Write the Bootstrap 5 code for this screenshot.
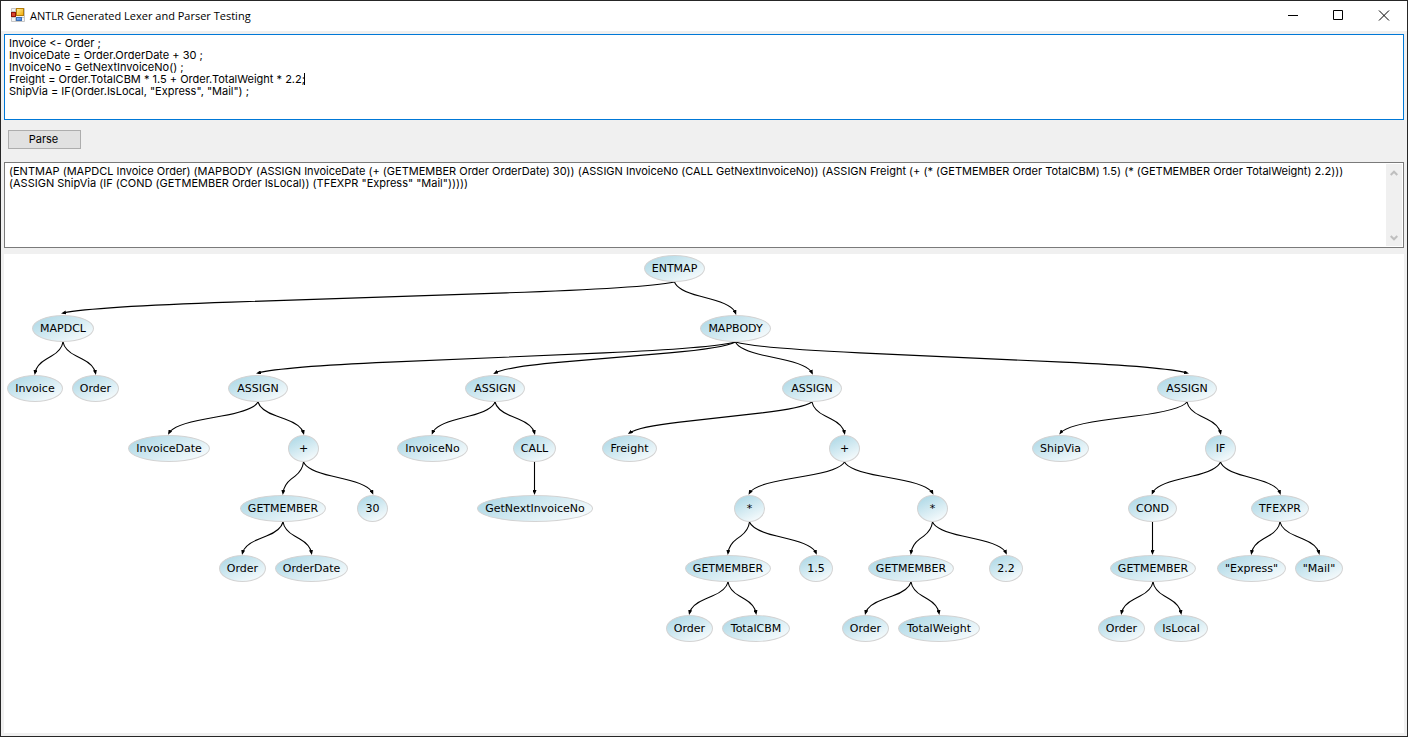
<!DOCTYPE html>
<html lang="en">
<head>
<meta charset="utf-8">
<meta name="viewport" content="width=device-width, initial-scale=1">
<title>ANTLR Generated Lexer and Parser Testing</title>
<link href="https://cdn.jsdelivr.net/npm/bootstrap@5.3.0/dist/css/bootstrap.min.css" rel="stylesheet">
<style>
  body { background: #f0f0f0; color: #000; font: 11px/12px Inter, "Liberation Sans", sans-serif; }
  .app-window { border: 1px solid #262626; }
  .title-bar { height: 30px; background: #fff; }
  .app-icon { margin: 0 4px 0 9px; }
  .title-text { font: 11px/16px "Open Sans", "Noto Sans", sans-serif; }
  .win-btn { width: 46px; height: 30px; padding: 0; border: 0; background: none; color: #000; }
  .client { padding: 3px; }
  .edit-box { height: 86px; background: #fff; border: 1px solid #7a7a7a; }
  .edit-box.active { border-color: #0078d7; }
  .edit-box textarea { padding: 2px 4px; border: 0; outline: 0; resize: none; overflow: hidden; background: none; color: #000; font: inherit; font-feature-settings: "calt" 0; }
  .caret { position: absolute; left: 299px; top: 38px; width: 1px; height: 12px; background: #000; }
  .scroll-strip { width: 16px; margin: 1px; background: #f0f0f0; color: #bfbfbf; }
  .scroll-strip button { height: 17px; padding: 0; border: 0; background: none; color: inherit; }
  .btn-parse { width: 73px; height: 19px; padding: 0 2px 1px 0; border: 1px solid #adadad; border-radius: 0; background: #e1e1e1; color: #000; font: inherit; }
  .tool-row { padding: 10px 4px 13px; }
  .tree-canvas { min-height: 479px; margin-top: 6px; background: #fff; }
  .tree-canvas svg { display: block; overflow: visible; }
  .tree-node { position: absolute; height: 27px; border: 1px solid #d3d3d3; border-radius: 50%; background: linear-gradient(155deg, #add8e6 5%, #fff 100%); font: 11px/26px "DejaVu Sans", Verdana, sans-serif; text-align: center; white-space: nowrap; display: flex; justify-content: center; }
</style>
</head>
<body>
<div class="app-window d-flex flex-column min-vh-100">
  <header class="title-bar d-flex align-items-center">
    <svg class="app-icon" width="16" height="16" viewBox="0 0 16 16" aria-hidden="true">
      <defs>
        <linearGradient id="gy" x1="0" y1="0" x2="1" y2="1"><stop offset="0" stop-color="#fff0a0"/><stop offset="1" stop-color="#f0a800"/></linearGradient>
        <linearGradient id="gb" x1="0" y1="0" x2="1" y2="1"><stop offset="0" stop-color="#9cc4ff"/><stop offset="1" stop-color="#2f74e0"/></linearGradient>
      </defs>
      <path d="M1.500 .5h13v13h-13z" fill="#f4f4f4" stroke="#c6c6c6"/>
      <path d="M1.500 3.500h5M5.500 1v12M1 9.500h14" stroke="#c6c6c6"/>
      <rect x="6.500" y=".5" width="7" height="7" fill="url(#gy)" stroke="#b67d08"/>
      <rect x="1.500" y="4.500" width="4" height="4" fill="#d8432f" stroke="#8e1509"/>
      <rect x="6.500" y="9.500" width="5" height="3" fill="url(#gb)" stroke="#3c6fb4"/>
    </svg>
    <span class="title-text flex-grow-1">ANTLR Generated Lexer and Parser Testing</span>
    <button type="button" class="win-btn" aria-label="Minimize"><svg width="11" height="11" viewBox="0 0 11 11"><path d="M1 4.500h10" stroke="currentColor"/></svg></button>
    <button type="button" class="win-btn" aria-label="Maximize"><svg width="11" height="11" viewBox="0 0 11 11" overflow="visible"><path d="M.5 -.5h9v9h-9z" fill="none" stroke="currentColor"/></svg></button>
    <button type="button" class="win-btn" aria-label="Close"><svg width="11" height="11" viewBox="0 0 11 11" overflow="visible"><path d="M0 -.5l10 10M10 -.5l-10 10" stroke="currentColor"/></svg></button>
  </header>

  <main class="client d-flex flex-column flex-grow-1">
    <div class="edit-box active d-flex position-relative">
      <textarea class="flex-grow-1" aria-label="Source" spellcheck="false">Invoice &lt;- Order ;
InvoiceDate = Order.OrderDate + 30 ;
InvoiceNo = GetNextInvoiceNo() ;
Freight = Order.TotalCBM * 1.5 + Order.TotalWeight * 2.2;
ShipVia = IF(Order.IsLocal, "Express", "Mail") ;</textarea>
      <span class="caret"></span>
    </div>
    <div class="tool-row d-flex">
      <button type="button" class="btn btn-parse">Parse</button>
    </div>
    <div class="edit-box d-flex">
      <textarea class="flex-grow-1" aria-label="Parse result" spellcheck="false" readonly>(ENTMAP (MAPDCL Invoice Order) (MAPBODY (ASSIGN InvoiceDate (+ (GETMEMBER Order OrderDate) 30)) (ASSIGN InvoiceNo (CALL GetNextInvoiceNo)) (ASSIGN Freight (+ (* (GETMEMBER Order TotalCBM) 1.5) (* (GETMEMBER Order TotalWeight) 2.2))) (ASSIGN ShipVia (IF (COND (GETMEMBER Order IsLocal)) (TFEXPR "Express" "Mail")))))</textarea>
      <div class="scroll-strip d-flex flex-column justify-content-between">
        <button type="button" class="d-flex align-items-center justify-content-center" aria-label="Scroll up" disabled><svg width="8" height="6" viewBox="0 0 8 6"><path d="M.7 5L4 1.700 7.300 5" fill="none" stroke="currentColor" stroke-width="2"/></svg></button>
        <button type="button" class="d-flex align-items-center justify-content-center" aria-label="Scroll down" disabled><svg width="8" height="6" viewBox="0 0 8 6"><path d="M.7 1L4 4.300 7.300 1" fill="none" stroke="currentColor" stroke-width="2"/></svg></button>
      </div>
    </div>
    <div class="tree-canvas position-relative flex-grow-1" id="tree">
      <svg width="100%" height="400" aria-hidden="true">
        <defs>
          <marker id="tip" viewBox="0 0 5 4" refX="3" refY="2" markerWidth="5" markerHeight="4" markerUnits="userSpaceOnUse" orient="auto"><path d="M0 0L5 2 0 4z"/></marker>
        </defs>
        <g id="edges" fill="none" stroke="#000" stroke-width="1.100"></g>
      </svg>
    </div>
  </main>
</div>
<script src="https://cdn.jsdelivr.net/npm/bootstrap@5.3.0/dist/js/bootstrap.bundle.min.js"></script>
<script>
  // Each node: label, left edge, width, children.
  const root = ['ENTMAP', 640, 61, [
    ['MAPDCL', 28, 62, [['Invoice', 3, 56], ['Order', 68, 47]]],
    ['MAPBODY', 696, 71, [
      ['ASSIGN', 224, 60, [
        ['InvoiceDate', 124, 82],
        ['+', 284, 31, [
          ['GETMEMBER', 236, 86, [['Order', 215, 47], ['OrderDate', 271, 73]]],
          ['30', 353, 31]]]]],
      ['ASSIGN', 461, 60, [
        ['InvoiceNo', 393, 71],
        ['CALL', 509, 43, [['GetNextInvoiceNo', 473, 116]]]]],
      ['ASSIGN', 778, 60, [
        ['Freight', 598, 55],
        ['+', 825, 31, [
          ['*', 730, 31, [
            ['GETMEMBER', 681, 86, [['Order', 662, 47], ['TotalCBM', 718, 68]]],
            ['1.5', 795, 34]]],
          ['*', 913, 31, [
            ['GETMEMBER', 864, 86, [['Order', 838, 47], ['TotalWeight', 894, 82]]],
            ['2.2', 985, 34]]]]]]],
      ['ASSIGN', 1153, 60, [
        ['ShipVia', 1028, 57],
        ['IF', 1201, 31, [
          ['COND', 1124, 49, [
            ['GETMEMBER', 1106, 86, [['Order', 1094, 47], ['IsLocal', 1150, 54]]]]],
          ['TFEXPR', 1247, 58, [['"Express"', 1213, 69], ['"Mail"', 1291, 48]]]]]]]]]]];
  const ROW = 60, TOP = 1, HEIGHT = 27;
  const tree = document.getElementById('tree'), edges = document.getElementById('edges');

  // An S-curve that leaves the parent's foot, runs straight, and bends into the child's head.
  function edge(x1, y1, x2, y2) {
    if (Math.abs(x2 - x1) < 1) x2 = x1;
    const dx = x2 - x1, dy = y2 - y1;
    const near = Math.abs(dx) < 150, bend = near ? .4 : .25, drop = near ? .27 : .2;
    const ax = x1 + dx * .05, ay = y1 + dy * drop, bx = x2 - dx * .05, by = y2 - dy * drop;
    const px = ax + (bx - ax) * bend, py = ay + (by - ay) * bend;
    const qx = bx - (bx - ax) * bend, qy = by - (by - ay) * bend;
    const p = document.createElementNS('http://www.w3.org/2000/svg', 'path');
    p.setAttribute('d', `M${x1} ${y1}Q${ax} ${ay} ${px} ${py}L${qx} ${qy}Q${bx} ${by} ${x2} ${y2}`);
    p.setAttribute('marker-end', 'url(#tip)');
    edges.append(p);
  }
  function draw([label, left, width, children = []], depth) {
    const y = TOP + depth * ROW, cx = left + width / 2;
    const n = document.createElement('div');
    n.className = 'tree-node';
    n.textContent = label;
    n.style.cssText = `left:${left}px;top:${y}px;width:${width}px`;
    tree.append(n);
    for (const c of children) {
      edge(cx, y + HEIGHT, c[1] + c[2] / 2, y + ROW - 2);
      draw(c, depth + 1);
    }
  }
  draw(root, 0);
</script>
</body>
</html>
